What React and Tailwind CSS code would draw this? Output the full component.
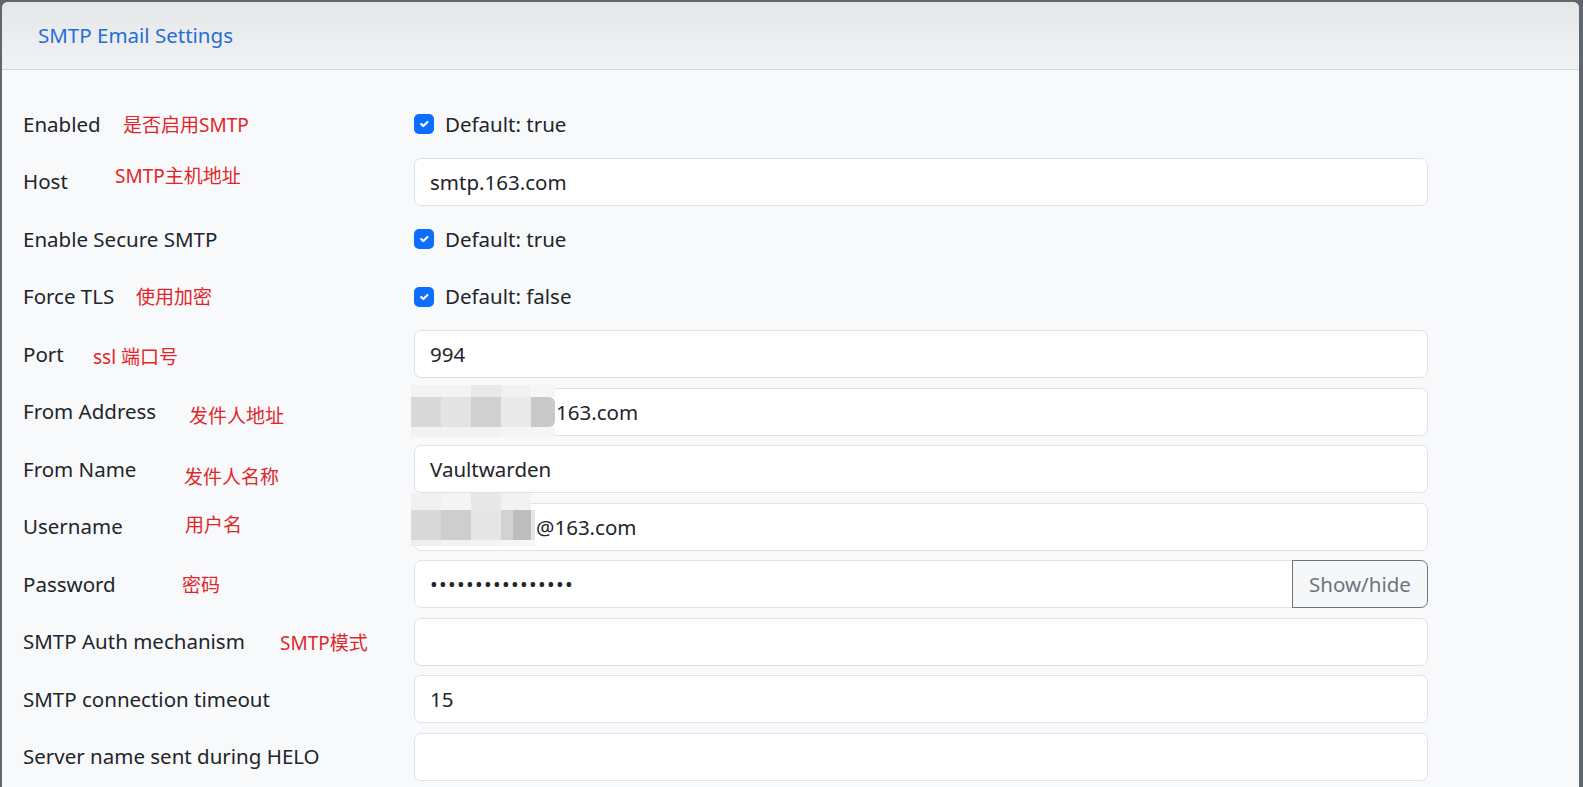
import { useState } from 'react';

const fontCls = "font-['Noto_Sans','Noto_Sans_CJK_SC',sans-serif]";

function Check() {
    return (
        <span className="flex h-[20px] w-[20px] flex-none items-center justify-center rounded-[5px] bg-[#0d6efd]">
            <svg width="14" height="14" viewBox="0 0 20 20" fill="none">
                <path d="M6 10l3 3 6-6" stroke="#fff" strokeWidth="3" strokeLinecap="round" strokeLinejoin="round" />
            </svg>
        </span>
    );
}

function CheckField({ text }) {
    return (
        <div className="flex items-center gap-[11px] text-[20.5px] text-[#212529]">
            <Check />
            <span>{text}</span>
        </div>
    );
}

function TextField({ value, className = '' }) {
    return (
        <input
            readOnly
            defaultValue={value}
            className={'block h-[48px] w-full rounded-[7px] border border-[#dee2e6] bg-white px-[15px] text-[20.5px] text-[#212529] outline-none ' + className}
        />
    );
}

// pixelated blur used in the screenshot to hide the address
function Mosaic({ blocks, className }) {
    return (
        <div className={'pointer-events-none absolute flex flex-col ' + className}>
            {blocks.map((row, i) => (
                <div key={i} className={'flex ' + row.h}>
                    {row.cells.map((c, j) => (
                        <div key={j} className={c} />
                    ))}
                </div>
            ))}
        </div>
    );
}

const fromMosaic = [
    { h: 'h-[12px]', cells: ['w-[60px] bg-[#f3f3f3]', 'w-[30px] bg-[#e9e9e9]', 'w-[30px] bg-[#f1f1f1]', 'w-[24px] bg-[#f6f6f6]'] },
    { h: 'h-[30px]', cells: ['w-[30px] bg-[#d9d9d9]', 'w-[30px] bg-[#e4e4e4]', 'w-[30px] bg-[#d0d0d0]', 'w-[30px] bg-[#e9e9e9]', 'w-[24px] rounded-r-[6px] bg-[#c9c9c9]'] },
    { h: 'h-[10px]', cells: ['w-[90px] bg-[#f2f2f2]', 'w-[54px] bg-[#f5f5f5]'] },
];

const userMosaic = [
    { h: 'h-[17px]', cells: ['w-[30px] bg-[#f0f0f0]', 'w-[30px] bg-[#f4f4f4]', 'w-[30px] bg-[#e8e8e8]', 'w-[30px] bg-[#f2f2f2]'] },
    { h: 'h-[30px]', cells: ['w-[30px] bg-[#d8d8d8]', 'w-[30px] bg-[#cecece]', 'w-[30px] bg-[#e6e6e6]', 'w-[12px] bg-[#d2d2d2]', 'w-[18px] bg-[#bdbdbd]', 'w-[4px] bg-[#e6e6e6]'] },
    { h: 'h-[6px]', cells: ['w-[30px] bg-[#efefef]', 'w-[60px] bg-[#f3f3f3]', 'w-[34px] bg-[#f6f6f6]'] },
];

function Row({ label, note, noteCls, children }) {
    return (
        <div className="flex h-[48px] items-center">
            <div className="relative w-[391px] flex-none text-[20.5px] text-[#212529]">
                <span>{label}</span>
                {note && (
                    <span className={'absolute top-1/2 whitespace-nowrap text-[19px] text-[#e0262b] ' + noteCls}>
                        {note}
                    </span>
                )}
            </div>
            <div className="relative w-[1014px] flex-none">{children}</div>
        </div>
    );
}

export default function App() {
    const [showPass, setShowPass] = useState(false);

    return (
        <div className={'min-h-screen bg-[#60666d] pl-[2px] pr-[4px] pt-[2px] ' + fontCls}>
            <div className="min-h-[785px] overflow-hidden rounded-t-[6px] bg-[#f8f9fa]">
                <div className="flex h-[68px] items-center border-b border-[#d3d6da] bg-linear-to-b from-[#e6e7e9] to-[#f1f2f4] pl-[36px]">
                    <h6 className="text-[20.5px] text-[#1f6fd6]">SMTP Email Settings</h6>
                </div>

                <div className="flex flex-col gap-[9.5px] px-[21px] pt-[30px]">
                    <Row label="Enabled" note="是否启用SMTP" noteCls="left-[100px] -translate-y-[45%]">
                        <CheckField text="Default: true" />
                    </Row>
                    <Row label="Host" note="SMTP主机地址" noteCls="left-[92px] -translate-y-[70%]">
                        <TextField value="smtp.163.com" />
                    </Row>
                    <Row label="Enable Secure SMTP">
                        <CheckField text="Default: true" />
                    </Row>
                    <Row label="Force TLS" note="使用加密" noteCls="left-[113px] -translate-y-[50%]">
                        <CheckField text="Default: false" />
                    </Row>
                    <Row label="Port" note="ssl 端口号" noteCls="left-[70px] -translate-y-[40%]">
                        <TextField value="994" />
                    </Row>
                    <Row label="From Address" note="发件人地址" noteCls="left-[166px] -translate-y-[35%]">
                        <TextField value="163.com" className="pl-[141px]" />
                        <Mosaic blocks={fromMosaic} className="-top-[3px] left-[-3px] blur-[0.6px]" />
                    </Row>
                    <Row label="From Name" note="发件人名称" noteCls="left-[161px] -translate-y-[20%]">
                        <TextField value="Vaultwarden" />
                    </Row>
                    <Row label="Username" note="用户名" noteCls="left-[162px] -translate-y-[55%]">
                        <TextField value="@163.com" className="pl-[121px]" />
                        <Mosaic blocks={userMosaic} className="-top-[10px] left-[-3px] blur-[0.6px]" />
                    </Row>
                    <Row label="Password" note="密码" noteCls="left-[159px] -translate-y-[45%]">
                        <div className="flex h-[48px]">
                            <input
                                readOnly
                                type={showPass ? 'text' : 'password'}
                                defaultValue="smtppassword1234"
                                className="block h-[48px] min-w-0 flex-1 rounded-l-[7px] border border-[#dee2e6] bg-white px-[15px] text-[20.5px] tracking-[1.3px] text-[#212529] outline-none"
                            />
                            <button
                                onClick={() => setShowPass(!showPass)}
                                className="-ml-px h-[48px] w-[136px] flex-none rounded-r-[7px] border border-[#6c757d] bg-[#f6f7f8] text-[20.5px] text-[#6c757d]"
                            >
                                Show/hide
                            </button>
                        </div>
                    </Row>
                    <Row label="SMTP Auth mechanism" note="SMTP模式" noteCls="left-[257px] -translate-y-[45%]">
                        <TextField value="" />
                    </Row>
                    <Row label="SMTP connection timeout">
                        <TextField value="15" />
                    </Row>
                    <Row label="Server name sent during HELO">
                        <TextField value="" />
                    </Row>
                </div>
            </div>
        </div>
    );
}
